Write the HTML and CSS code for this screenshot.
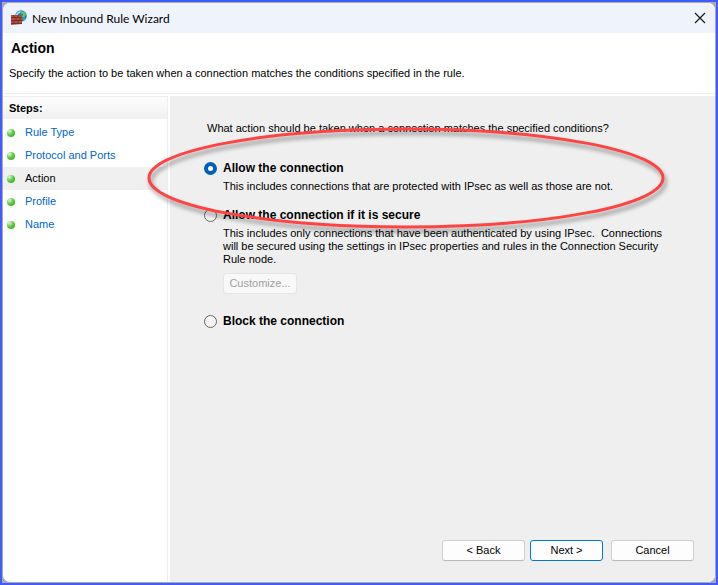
FILE: index.html
```html
<!DOCTYPE html>
<html lang="en">
  <head>
    <meta charset="UTF-8" />
    <meta name="viewport" content="width=device-width, initial-scale=1.0" />
    <title>New Inbound Rule Wizard</title>
    <link rel="stylesheet" href="styles.css">
  </head>
  <body>
    <div class="window">
      <div class="titlebar">
        <svg class="app-icon" width="16" height="16" viewBox="0 0 16 16" aria-hidden="true">
          <circle cx="10" cy="6" r="5.8" fill="#2377d0" />
          <path d="M5 4Q7 1 10 .8L9 3L7 4L7 6L5 7Z" fill="#a8dcf8" />
          <path d="M10 1L14 2L15 5L13 8L11 7L12 4L9 3ZM12 9L14 8L13 11Z" fill="#5cc85c" />
          <path d="M0 5H11V14L0 15Z" fill="#b5503c" />
          <path d="M0 7.500H11M0 10.500H11M0 13.500H11M3 5V7.500M7 5V7.500M5 8V10.500M9 8V10.500M3 11V13M7 11V13" stroke="#6a2a22" stroke-width=".8" fill="none" />
        </svg>
        <span class="window-title">New Inbound Rule Wizard</span>
        <button class="close" type="button" aria-label="Close">
          <svg width="12" height="12" viewBox="0 0 12 12">
            <path d="M1 1L11 11M11 1L1 11" stroke="#191919" stroke-width="1.2" fill="none" />
          </svg>
        </button>
      </div>

      <header class="header">
        <h1>Action</h1>
        <p>Specify the action to be taken when a connection matches the conditions specified in the rule.</p>
      </header>

      <div class="content">
        <nav class="steps">
          <h2>Steps:</h2>
          <ul>
            <li><span class="dot"></span><a href="#type">Rule Type</a></li>
            <li><span class="dot"></span><a href="#ports">Protocol and Ports</a></li>
            <li class="current"><span class="dot"></span><a href="#action" aria-current="step">Action</a></li>
            <li><span class="dot"></span><a href="#profile">Profile</a></li>
            <li><span class="dot"></span><a href="#name">Name</a></li>
          </ul>
        </nav>

        <form class="main">
          <p class="question" id="question">What action should be taken when a connection matches the specified conditions?</p>
          <div class="options" role="radiogroup" aria-labelledby="question">
            <div class="option">
              <input type="radio" name="action" id="allow" checked>
              <label for="allow">Allow the connection</label>
              <p>This includes connections that are protected with IPsec as well as those are not.</p>
            </div>
            <div class="option">
              <input type="radio" name="action" id="secure">
              <label for="secure">Allow the connection if it is secure</label>
              <p>This includes only connections that have been authenticated by using IPsec.&nbsp; Connections will be secured using the settings in IPsec properties and rules in the Connection Security Rule node.</p>
              <button class="customize" type="button" disabled>Customize...</button>
            </div>
            <div class="option">
              <input type="radio" name="action" id="block">
              <label for="block">Block the connection</label>
            </div>
          </div>

          <div class="buttons">
            <button class="btn" type="button">&lt; Back</button>
            <button class="btn next" type="button">Next &gt;</button>
            <button class="btn cancel" type="button">Cancel</button>
          </div>

          <!-- highlight drawn over the first option -->
          <svg class="highlight" width="530" height="114" viewBox="0 0 530 114" aria-hidden="true">
            <ellipse cx="265" cy="54" rx="257" ry="49" />
          </svg>
        </form>
      </div>
    </div>
  </body>
</html>
```

FILE: styles.css
```css
* {
  box-sizing: border-box;
  padding: 0;
  margin: 0;
}
body {
  min-height: 100vh;
  display: flex;
  border: 2px solid #405cff;
  background-color: #aaa;
  color: #000;
  font-family: "Liberation Sans", Arial, sans-serif;
  font-size: 11px;
  line-height: 13px;
}
.window {
  flex: 1;
  display: flex;
  flex-direction: column;
  border: 1px solid #aaa;
  border-radius: 8px;
  background-color: #fff;
  overflow: hidden;
}
.titlebar {
  display: flex;
  align-items: center;
  height: 30px;
  padding: 0 9px 0 8px;
  background-color: #eff3fb;
}
.window-title {
  flex: 1;
  padding-left: 5px;
  font-family: Lato, "Open Sans", sans-serif;
  font-size: 12px;
}
.close {
  display: flex;
  border: none;
  background: none;
}
.header {
  height: 61px;
  padding: 7px 6px;
  border-bottom: 1px solid #eee;
}
.header h1 {
  padding-left: 2px;
  font-size: 14px;
  line-height: 16px;
}
.header p {
  padding-top: 11px;
}
.content {
  flex: 1;
  display: flex;
  gap: 2px;
  padding-top: 2px;
}
.steps {
  flex: 0 0 165px;
  border-right: 1px solid #eee;
}
.steps h2 {
  margin-bottom: 2px;
  padding: 5px 6px 4px;
  border-top: 1px solid #eee;
  background: linear-gradient(#fdfdfd, #f0f0f0);
  font-size: 11px;
  line-height: 13px;
}
.steps ul {
  list-style: none;
}
.steps li {
  display: flex;
  align-items: center;
  gap: 10px;
  height: 23px;
  padding-left: 4px;
}
.steps a {
  color: #0066cc;
  text-decoration: none;
}
.steps .current {
  background-color: #f0f0f0;
}
.steps .current a {
  color: #000;
}
.dot {
  width: 8px;
  height: 8px;
  border-radius: 50%;
  background: radial-gradient(circle at 30% 25%, #e0f5d8, #55c936 50%, #3fa22d);
}
.main {
  position: relative;
  flex: 1;
  display: flex;
  flex-direction: column;
  padding: 26px 21px 21px 34px;
  background-color: #efefef;
}
.question {
  padding-left: 3px;
}
.options {
  display: flex;
  flex-direction: column;
  gap: 15px;
  padding-top: 26px;
}
.option {
  display: grid;
  grid-template-columns: 13px minmax(0, 446px);
  column-gap: 6px;
  row-gap: 4px;
  align-items: center;
}
.option input {
  appearance: none;
  width: 13px;
  height: 13px;
  border: 1px solid #666;
  border-radius: 50%;
  background-color: #f5f5f5;
}
.option input:checked {
  border: 4px solid #005fb8;
  background-color: #fff;
}
.option label {
  font-size: 12px;
  font-weight: bold;
  line-height: 15px;
}
.option p,
.customize {
  grid-column: 2;
}
.customize {
  justify-self: start;
  width: 74px;
  height: 21px;
  margin: 3px 0 5px;
  border: 1px solid #e5e5e5;
  border-radius: 3px;
  background-color: #f8f8f8;
  color: #a0a0a0;
  font: inherit;
}
.buttons {
  display: flex;
  justify-content: flex-end;
  gap: 5px;
  margin-top: auto;
}
.btn {
  width: 83px;
  height: 21px;
  border: 1px solid #d0d0d0;
  border-bottom-color: #bababa;
  border-radius: 3px;
  background-color: #fdfdfd;
  color: #000;
  font: inherit;
}
.btn.next {
  width: 73px;
  border-color: #0078d4;
}
.btn.cancel {
  margin-left: 3px;
}
.highlight {
  position: absolute;
  top: 28px;
  left: -29px;
  pointer-events: none;
}
.highlight ellipse {
  fill: none;
  stroke: #ff4343;
  stroke-width: 3px;
  filter: drop-shadow(2px 4px 2px rgba(0, 0, 0, 0.4));
}
```
